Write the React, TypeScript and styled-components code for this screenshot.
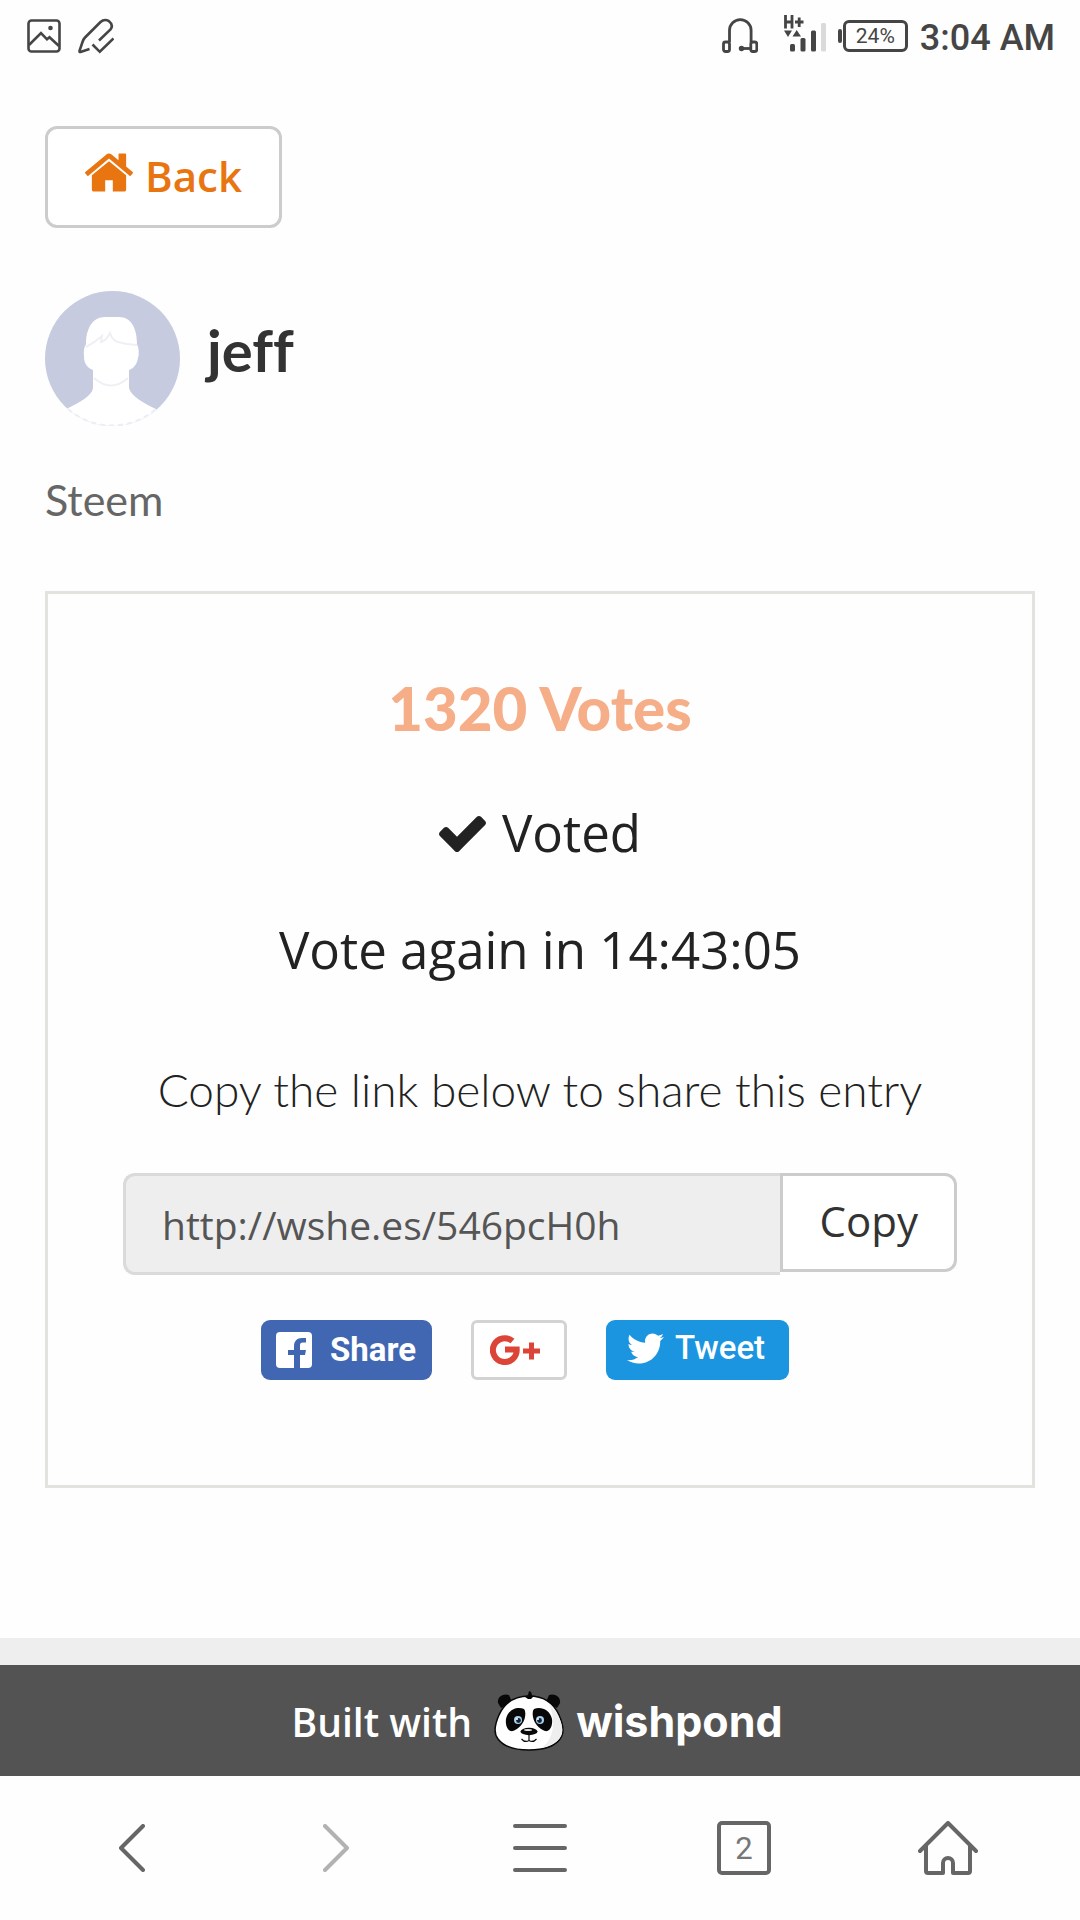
import React from "react";
import styled, { createGlobalStyle } from "styled-components";
import { FaTwitter } from "react-icons/fa";

const GlobalStyle = createGlobalStyle`
  *, *::before, *::after { box-sizing: border-box; }
  body { margin: 0; background: #fefefe; }
  button, input { margin: 0; font: inherit; color: inherit; }
  button { cursor: pointer; }
  svg { display: block; flex: none; }
`;

const humanist = `"Open Sans", "Noto Sans", sans-serif`;
const geometric = `Lato, sans-serif`;
const system = `Roboto, sans-serif`;

const Screen = styled.div`
  display: flex;
  flex-direction: column;
  min-height: 100vh;
  font-family: ${humanist};
  color: #222;
`;

const StatusBar = styled.header`
  display: flex;
  align-items: center;
  justify-content: space-between;
  height: 72px;
  padding: 0 25px 0 27px;
  color: #454545;
  font-family: ${system};
`;

const StatusGroup = styled.div<{ $gap: number }>`
  display: flex;
  align-items: center;
  gap: ${(p) => p.$gap}px;
`;

const Battery = styled.div`
  display: flex;
  align-items: center;
  gap: 1px;
`;

const BatteryTip = styled.span`
  width: 4px;
  height: 14px;
  border-radius: 2px;
  background: currentColor;
`;

const BatteryBody = styled.span`
  display: flex;
  align-items: center;
  justify-content: center;
  width: 65px;
  height: 32px;
  border: 3px solid currentColor;
  border-radius: 6px;
  font-size: 21px;
  line-height: 24px;
`;

const Clock = styled.time`
  padding-top: 4px;
  font-size: 36px;
  font-weight: 500;
  line-height: 44px;
`;

const Main = styled.main`
  flex: 1;
  padding: 54px 45px 150px;
`;

const BackButton = styled.button`
  display: inline-flex;
  align-items: baseline;
  gap: 12px;
  padding: 17px 37px 19px;
  border: 3px solid #ccc;
  border-radius: 12px;
  background: #fff;
  color: #e97510;
  font-size: 42px;
  font-weight: 600;
  line-height: 60px;
  vertical-align: top;
`;

const Profile = styled.section`
  display: flex;
  align-items: flex-start;
  gap: 27px;
  margin-top: 63px;
`;

const Name = styled.h1`
  margin: 0;
  font-family: ${geometric};
  font-size: 58px;
  font-weight: 700;
  font-variant-ligatures: none;
  line-height: 117px;
  color: #333;
`;

const Description = styled.p`
  margin: 44px 0 61px;
  font-family: ${geometric};
  font-size: 43px;
  line-height: 60px;
  color: #666;
`;

const VoteCard = styled.section`
  display: flex;
  flex-direction: column;
  padding: 78px 75px 105px;
  border: 3px solid #e2e2df;
  text-align: center;
`;

const VoteCount = styled.h2`
  margin: 0;
  font-family: ${geometric};
  font-size: 60px;
  font-weight: 900;
  line-height: 72px;
  color: #f5ae87;
`;

const VoteState = styled.p<{ $top: number }>`
  display: flex;
  align-items: baseline;
  justify-content: center;
  gap: 16px;
  margin: ${(p) => p.$top}px 0 0;
  font-size: 51px;
  line-height: 72px;
`;

const ShareHint = styled.label`
  margin: 69px 0 47px;
  font-family: ${geometric};
  font-size: 46px;
  font-weight: 300;
  line-height: 72px;
`;

const LinkGroup = styled.div`
  display: flex;
  align-items: flex-start;
`;

const LinkField = styled.input`
  flex: 1;
  min-width: 0;
  height: 102px;
  padding: 0 36px;
  border: 3px solid #dadada;
  border-right: 0;
  border-radius: 12px 0 0 12px;
  background: #eee;
  color: #555;
  font-size: 39px;
`;

const CopyButton = styled.button`
  height: 99px;
  padding: 0 36px 5px 37px;
  border: 3px solid #ccc;
  border-radius: 0 12px 12px 0;
  background: #fff;
  color: #333;
  font-size: 42px;
`;

const SocialRow = styled.div`
  display: flex;
  justify-content: center;
  gap: 39px;
  margin-top: 45px;
  padding-right: 30px;
`;

const SocialButton = styled.button<{ $bg: string; $weight?: number; $outlined?: boolean }>`
  display: flex;
  align-items: center;
  height: 60px;
  padding: ${(p) => (p.$outlined ? "0 24px 0 16px" : "0 16px 0 15px")};
  border: ${(p) => (p.$outlined ? "3px solid #d3d3d3" : "0")};
  border-radius: ${(p) => (p.$outlined ? 6 : 9)}px;
  background: ${(p) => p.$bg};
  color: #fff;
  font-family: ${system};
  font-size: 33px;
  font-weight: ${(p) => p.$weight ?? 500};
  line-height: 40px;
`;

const FacebookButton = styled(SocialButton)`
  gap: 18px;
`;

const TweetButton = styled(SocialButton)`
  gap: 11px;
  padding: 0 24px 4px 21px;
`;

const Strip = styled.div`
  height: 27px;
  background: #eee;
`;

const BuiltWith = styled.footer`
  display: flex;
  align-items: center;
  justify-content: center;
  height: 111px;
  padding: 1px 6px 0 0;
  background: #535353;
  color: #fff;
  font-size: 39px;
  font-weight: 600;
`;

const Brand = styled.a`
  display: flex;
  align-items: center;
  gap: 12px;
  margin-left: 22px;
  color: inherit;
  font-family: Inter, sans-serif;
  font-size: 43px;
  font-weight: 700;
  line-height: 60px;
  text-decoration: none;
`;

const NavBar = styled.nav`
  display: grid;
  grid-template-columns: repeat(5, 1fr);
  height: 144px;
  padding: 0 30px;
  background: #fefefe;
`;

const NavButton = styled.button<{ $dim?: boolean }>`
  display: flex;
  align-items: center;
  justify-content: center;
  padding: 0;
  border: 0;
  background: none;
  color: ${(p) => (p.$dim ? "#b2b2b2" : "#666")};
`;

const TabCount = styled.span`
  display: flex;
  align-items: center;
  justify-content: center;
  width: 54px;
  height: 54px;
  border: 4px solid #666;
  border-radius: 5px;
  color: #777;
  font-family: ${system};
  font-size: 31px;
`;

const PictureIcon = () => (
  <svg width="34" height="34" viewBox="0 0 34 34" fill="none" stroke="currentColor" strokeWidth="2.6">
    <rect x="1.5" y="1.5" width="31" height="31" rx="3" />
    <path d="M2 26 14 14l6 6.300 2.500-2L32 27" />
    <circle cx="23.500" cy="9" r="2.300" fill="currentColor" stroke="none" />
  </svg>
);

const PencilIcon = () => (
  <svg width="36" height="36" viewBox="0 0 36 36" fill="none" stroke="currentColor" strokeWidth="2.6">
    <path d="M11.500 31 2.500 34Q1.200 34.200 1.600 32.500L4.500 24Q5.500 21 7 19.500L22.500 4Q26.500.500 31 3.200 35.800 7 32.500 11.500L21 22.500" />
    <path d="m14.500 26.500 7.300 7.300L35.500 20.500" />
  </svg>
);

const HeadsetIcon = () => (
  <svg width="36" height="36" viewBox="0 0 36 36" fill="none" stroke="currentColor" strokeWidth="2.8">
    <path d="M7.500 24V12.500a10.800 10.800 0 0 1 21.600 0V24" />
    <rect x="1.500" y="24" width="6" height="9.500" rx="2" />
    <rect x="28.800" y="24" width="6" height="9.500" rx="2" />
    <path d="M20 30.500h9" />
    <circle cx="19.500" cy="30.500" r="2.700" fill="currentColor" stroke="none" />
  </svg>
);

const SignalIcon = () => (
  <svg width="42" height="42" viewBox="0 -3 42 42" fill="currentColor">
    <path d="M1.500-3v13.500M8-3v13.500M1.500 4H8M11 4h8.500M15.200-.500v9.500" stroke="currentColor" strokeWidth="2.800" fill="none" />
    <path d="M0 12.500h8L4 19zM8.500 18.500h8.500L12.700 12z" />
    <rect x="6" y="26" width="5" height="7.500" rx="1.500" />
    <rect x="16.500" y="20" width="5" height="13.500" rx="1.500" />
    <rect x="27" y="12.500" width="5" height="21" rx="1.500" />
    <rect x="37" y="5" width="5" height="28.500" rx="1.500" fill="#dadada" />
  </svg>
);

const HouseIcon = () => (
  <svg width="48" height="39" viewBox="89 250 1614 1288" fill="currentColor">
    <path d="M1472 992v480q0 26-19 45t-45 19h-384v-384h-256v384h-384q-26 0-45-19t-19-45v-480q0-1 .5-3t.5-3l575-474 575 474q1 2 1 6zm223-69l-62 74q-8 9-21 11h-3q-13 0-21-7l-692-577-692 577q-12 8-24 7-13-2-21-11l-62-74q-8-10-7-23.500t11-21.500l719-599q32-26 76-26t76 26l244 204v-195q0-14 9-23t23-9h192q14 0 23 9t9 23v408l219 182q10 8 11 21.500t-7 23.500z" />
  </svg>
);

const CheckIcon = () => (
  <svg width="47" height="36" viewBox="121 334 1550 1188" fill="currentColor">
    <path d="M1671 566q0 40-28 68l-724 724-136 136q-28 28-68 28t-68-28l-136-136-362-362q-28-28-28-68t28-68l136-136q28-28 68-28t68 28l294 295 656-657q28-28 68-28t68 28l136 136q28 28 28 68z" />
  </svg>
);

const Avatar = () => (
  <svg width="135" height="135" viewBox="0 0 135 135" role="img" aria-label="jeff">
    <clipPath id="disc">
      <circle cx="67.500" cy="67.500" r="67.500" />
    </clipPath>
    <g clipPath="url(#disc)">
      <rect width="135" height="135" fill="#c6cbdf" />
      <path
        fill="#fff"
        d="M21 118C34 112 47 105 48 97V79C42 77 39 72 39 66Q38 58 41 53C41 37 48 26 60 26H74C86 26 92 37 92 53Q95 60 93 67C92 73 89 77 84 79V97C86 105 98 112 111 118L118 135H14Z"
      />
    </g>
    <path d="M23 118A67 67 0 0 0 111 118" fill="none" stroke="#eceef5" strokeWidth="2" strokeDasharray="5 4" />
    <path d="M41 56Q49 52 57 45L56 51Q61 50 65 42Q67 49 73 51Q83 54 92 54M49 87Q66 102 83 87" fill="none" stroke="#eff0f6" strokeWidth="2" />
  </svg>
);

const FacebookIcon = () => (
  <svg width="36" height="36" viewBox="0 0 36 36">
    <rect width="36" height="36" rx="4" fill="#fff" />
    <path d="M18 36V23h-6v-5h6v-3.500C18 9 21 6 26 6h4v4.500h-3c-2.300 0-3 1-3 3V18h6l-1 5h-5v13z" fill="#4267b2" />
  </svg>
);

const GooglePlusIcon = () => (
  <svg width="50" height="30" viewBox="0 0 50 30" fill="none" stroke="#db4437">
    <path d="M22.500 6A11.900 11.900 0 1 0 26.700 14.500H15" strokeWidth="6" />
    <path d="M33 16h17M41.500 7.500v17" strokeWidth="5" />
  </svg>
);

const PandaIcon = () => (
  <svg width="70" height="60" viewBox="0 0 70 60">
    <path d="M4 12C3 6 9 2 15 4L18 11 7 17ZM66 12C67 6 61 2 55 4L52 11 63 17Z" fill="#080808" />
    <path d="M35 5C50 5 60 13 65 24C69 33 71 42 66 48C60 56 48 59 35 59S10 56 4 48C-1 42 1 33 5 24C10 13 20 5 35 5Z" fill="#fff" stroke="#080808" strokeWidth="1.500" />
    <path d="M55 13C62 19 72 35 67 45C63 53 55 55 47 57C57 51 64 34 55 13Z" fill="#eee" />
    <path d="M31 6 34 4 35 0 37 1 38 4 39 6 37 8 34 8Z" fill="#080808" />
    <path d="M30 18C24 15 14 18 12 28C11 36 15 41 19 40C25 38 30 32 31 26Q32 20 30 18ZM40 18C46 15 56 18 58 28C59 36 55 41 51 40C45 38 40 32 39 26Q38 20 40 18Z" fill="#080808" />
    <circle cx="24" cy="29" r="4" fill="#a9d3ef" />
    <circle cx="46" cy="29" r="4" fill="#a9d3ef" />
    <circle cx="24.500" cy="29.500" r="2.400" fill="#123" />
    <circle cx="45.500" cy="29.500" r="2.400" fill="#123" />
    <circle cx="23" cy="28" r="1" fill="#fff" />
    <circle cx="44" cy="28" r="1" fill="#fff" />
    <ellipse cx="35" cy="40.500" rx="8.500" ry="3.700" fill="#080808" />
    <ellipse cx="34" cy="39" rx="4" ry="1" fill="#ddd" />
    <path d="M35 43v6M27.500 48Q31 52 35 49.500 39 52 42.500 48" fill="none" stroke="#080808" strokeWidth="1.200" />
  </svg>
);

const ArrowIcon = ({ forward }: { forward?: boolean }) => (
  <svg width="26" height="48" viewBox="0 0 26 48" fill="none" stroke="currentColor" strokeWidth="4" strokeLinecap="round" strokeLinejoin="round">
    <path d={forward ? "M2 2 24 24 2 46" : "M24 2 2 24 24 46"} />
  </svg>
);

const MenuIcon = () => (
  <svg width="54" height="48" viewBox="0 0 54 48" stroke="currentColor" strokeWidth="4" strokeLinecap="round">
    <path d="M2 2h50M2 24h50M2 46h50" />
  </svg>
);

const HomeIcon = () => (
  <svg width="60" height="54" viewBox="0 0 60 54" fill="none" stroke="currentColor" strokeWidth="4" strokeLinecap="round" strokeLinejoin="round">
    <path d="M2 30 30 2 58 30M8 25V50Q8 52 10 52H25V42a5 5 0 0 1 10 0V52H50Q52 52 52 50V25" />
  </svg>
);

export default function App() {
  return (
    <Screen>
      <GlobalStyle />
      <StatusBar>
        <StatusGroup $gap={17}>
          <PictureIcon />
          <PencilIcon />
        </StatusGroup>
        <StatusGroup $gap={12}>
          <StatusGroup $gap={26}>
            <HeadsetIcon />
            <SignalIcon />
          </StatusGroup>
          <Battery>
            <BatteryTip />
            <BatteryBody>24%</BatteryBody>
          </Battery>
          <Clock>3:04 AM</Clock>
        </StatusGroup>
      </StatusBar>

      <Main>
        <BackButton type="button">
          <HouseIcon />
          Back
        </BackButton>

        <Profile>
          <Avatar />
          <Name>jeff</Name>
        </Profile>
        <Description>Steem</Description>

        <VoteCard>
          <VoteCount>1320 Votes</VoteCount>
          <VoteState $top={52}>
            <CheckIcon />
            Voted
          </VoteState>
          <VoteState $top={45}>Vote again in 14:43:05</VoteState>
          <ShareHint htmlFor="entry-link">Copy the link below to share this entry</ShareHint>
          <LinkGroup>
            <LinkField id="entry-link" type="text" readOnly value="http://wshe.es/546pcH0h" />
            <CopyButton type="button">Copy</CopyButton>
          </LinkGroup>
          <SocialRow>
            <FacebookButton type="button" $bg="#4267b2" $weight={700}>
              <FacebookIcon />
              Share
            </FacebookButton>
            <SocialButton type="button" $bg="#fff" $outlined aria-label="Share on Google Plus">
              <GooglePlusIcon />
            </SocialButton>
            <TweetButton type="button" $bg="#1b95e0">
              <FaTwitter size={37} />
              Tweet
            </TweetButton>
          </SocialRow>
        </VoteCard>
      </Main>

      <Strip />
      <BuiltWith>
        Built with
        <Brand href="#wishpond">
          <PandaIcon />
          wishpond
        </Brand>
      </BuiltWith>

      <NavBar>
        <NavButton type="button" aria-label="Go back">
          <ArrowIcon />
        </NavButton>
        <NavButton type="button" aria-label="Go forward" $dim>
          <ArrowIcon forward />
        </NavButton>
        <NavButton type="button" aria-label="Menu">
          <MenuIcon />
        </NavButton>
        <NavButton type="button" aria-label="Open tabs">
          <TabCount>2</TabCount>
        </NavButton>
        <NavButton type="button" aria-label="Home">
          <HomeIcon />
        </NavButton>
      </NavBar>
    </Screen>
  );
}
